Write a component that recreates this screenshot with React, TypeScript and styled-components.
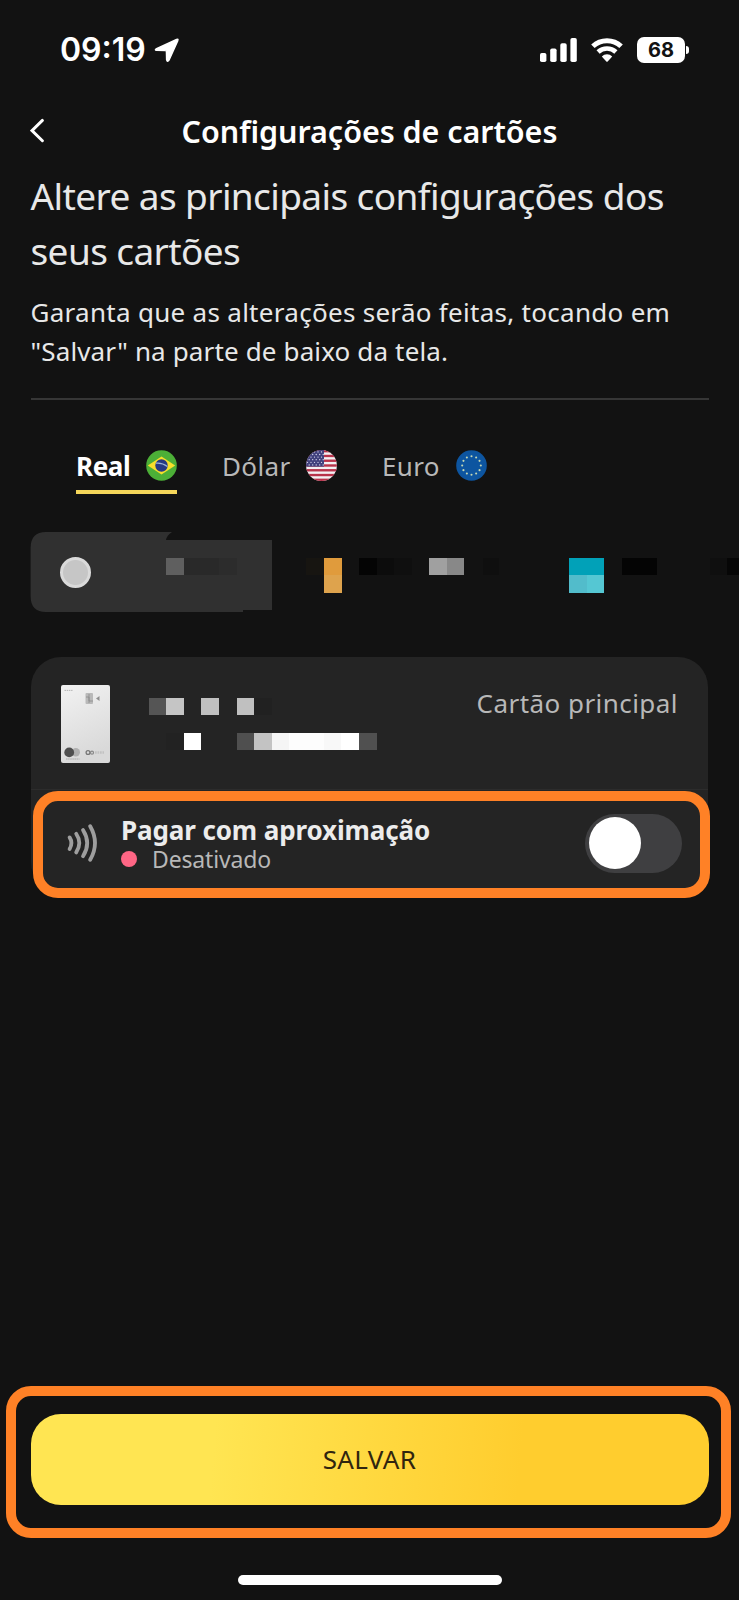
import React, { useState } from "react";
import styled, { createGlobalStyle } from "styled-components";

const GlobalStyle = createGlobalStyle`
  *, *::before, *::after { box-sizing: border-box; }
  body { margin: 0; background: #121212; }
  button { border: 0; margin: 0; padding: 0; background: none; color: inherit; font: inherit; }
  svg { display: block; flex: none; }
`;

const Screen = styled.main`
  display: flex;
  flex-direction: column;
  width: 739px;
  height: 1600px;
  overflow: hidden;
  background: #121212;
  color: #e8e8e8;
  font-family: "Noto Sans", "Open Sans", sans-serif;
  white-space: nowrap;
`;

const StatusBar = styled.div`
  display: flex;
  align-items: center;
  height: 99px;
  padding: 0 50px 0 60px;
  color: #fff;
`;

const Clock = styled.span`
  width: 94px;
  font: 600 32px/40px Inter, sans-serif;
  letter-spacing: 0px;
`;

const StatusIcons = styled.div`
  display: flex;
  align-items: center;
  gap: 14px;
  margin-left: auto;
`;

const Battery = styled.div`
  display: flex;
  align-items: center;
  gap: 1px;
`;

const BatteryBody = styled.div`
  width: 48px;
  height: 26px;
  border-radius: 7px;
  background: #fff;
  color: #121212;
  font: 700 20px/27px Inter, sans-serif;
  text-align: center;
`;

const BatteryTip = styled.i`
  width: 3px;
  height: 8px;
  border-radius: 0 3px 3px 0;
  background: #fff;
`;

const Header = styled.header`
  display: grid;
  grid-template-columns: 60px 1fr 60px;
  align-items: center;
  height: 40px;
  margin-top: 12px;
  padding: 0 30px;
`;

const Title = styled.h1`
  margin: -1px 0 0;
  color: #fff;
  font-size: 30.5px;
  font-weight: 600;
  line-height: 40px;
  letter-spacing: -0.05px;
  text-align: center;
`;

const Intro = styled.section`
  margin: 17px 30.5px 0;
  padding-bottom: 27px;
  border-bottom: 2px solid #363636;
`;

const Heading = styled.h2`
  margin: 0;
  font-size: 37px;
  font-weight: 400;
  line-height: 55px;
  letter-spacing: -0.6px;
`;

const Lead = styled.p`
  margin: 15px 0 0;
  font-size: 26px;
  line-height: 39px;
`;

const LeadLine = styled.span<{ $tracking: number }>`
  display: block;
  letter-spacing: ${(p) => p.$tracking}px;
`;

const Tabs = styled.nav`
  display: flex;
  height: 53px;
  margin: 41px 0 0 76px;
`;

const Tab = styled.button<{ $active?: boolean; $width: number; $gap: number }>`
  display: flex;
  align-items: center;
  justify-content: space-between;
  width: ${(p) => p.$width}px;
  margin-right: ${(p) => p.$gap}px;
  border-bottom: 4px solid ${(p) => (p.$active ? "#f5d65a" : "transparent")};
  color: ${(p) => (p.$active ? "#fff" : "#b8b8b8")};
  font-size: 26px;
  font-weight: ${(p) => (p.$active ? 700 : 400)};
  letter-spacing: ${(p) => (p.$active ? -0.4 : 0.35)}px;
`;

const Chips = styled.div`
  position: relative;
  height: 81px;
  margin-top: 38px;
`;

const ActiveChip = styled.div`
  display: flex;
  align-items: center;
  width: 242px;
  height: 81px;
  margin-left: 30px;
  padding-left: 30px;
  background: #303030;
  clip-path: path("M16 0H142Q137 3 136 8H242V78H213V80H16Q.6 80 .6 64V16Q.6 0 16 0Z");
`;

const ChipDot = styled.i`
  width: 31px;
  height: 31px;
  border: 3px solid #dadada;
  border-radius: 50%;
  background: #c6c6c6;
`;

const TileLayer = styled.svg`
  position: absolute;
  left: 0;
  top: 0;
`;

const CardPanel = styled.section`
  position: relative;
  height: 235px;
  margin: 44px 31px 0 30.5px;
  border-radius: 30px;
  background: #242424;
`;

const CardSummary = styled.div`
  display: flex;
  height: 133px;
  padding: 28px 30px 0;
  border-bottom: 1px solid #2c2c2c;
`;

const CardKind = styled.span`
  margin-left: auto;
  color: #b8b8b8;
  font-size: 26px;
  line-height: 36px;
  letter-spacing: 0.45px;
`;

const Contactless = styled.div`
  display: flex;
  align-items: center;
  width: 677px;
  height: 107px;
  margin: 1px 0 0 2.5px;
  padding: 0 18px 3px 23px;
  border: 10px solid #ff8126;
  border-radius: 25px;
`;

const ContactlessText = styled.div`
  display: flex;
  flex-direction: column;
  margin-left: 23px;
`;

const ContactlessTitle = styled.strong`
  color: #ececec;
  font-size: 26px;
  font-weight: 700;
  line-height: 32px;
  letter-spacing: -0.12px;
`;

const State = styled.span`
  display: flex;
  align-items: center;
  gap: 15px;
  color: #b8b8b8;
  font-size: 23px;
  line-height: 27px;
  letter-spacing: -0.15px;
`;

const StateDot = styled.i`
  width: 16px;
  height: 16px;
  border-radius: 50%;
  background: #ff6685;
`;

const Switch = styled.button<{ $on: boolean }>`
  display: flex;
  align-items: center;
  justify-content: ${(p) => (p.$on ? "flex-end" : "flex-start")};
  width: 97px;
  height: 59px;
  margin-left: auto;
  padding: 0 4px;
  border-radius: 30px;
  background: #3f3f41;
`;

const Knob = styled.i`
  width: 52px;
  height: 52px;
  border-radius: 50%;
  background: #fff;
`;

const Footer = styled.footer`
  display: flex;
  flex-direction: column;
  align-items: center;
  margin-top: auto;
  padding-bottom: 15px;
`;

const SaveFrame = styled.div`
  width: 725px;
  height: 152px;
  margin: 0 8px 37px 6px;
  padding: 18px 13px 0 14.5px;
  border: 10px solid #ff8126;
  border-radius: 25px;
`;

const SaveButton = styled.button`
  width: 678px;
  height: 91px;
  padding-bottom: 2px;
  border-radius: 30px;
  background: linear-gradient(95deg, #ffe552 27%, #ffcd2e 72%);
  color: #30250f;
  font-size: 26px;
  letter-spacing: 0.4px;
  text-align: center;
`;

const HomeIndicator = styled.div`
  width: 264px;
  height: 10px;
  margin-left: 1px;
  border-radius: 5px;
  background: #fff;
`;

type Tile = [x: number, y: number, w: number, h: number, fill: string];

const chipTiles: Tile[] = [
  [166, 26, 18, 17, "#5f5f5f"],
  [184, 26, 35, 17, "#292929"],
  [219, 26, 18, 17, "#2c2c2c"],
  [306, 26, 18, 17, "#171511"],
  [324, 26, 18, 17, "#e09b3c"],
  [324, 43, 18, 18, "#dea34d"],
  [359, 26, 18, 17, "#040404"],
  [377, 26, 17, 17, "#0c0c0c"],
  [394, 26, 18, 17, "#0f0f0f"],
  [429, 26, 18, 17, "#a0a0a0"],
  [447, 26, 17, 17, "#888888"],
  [483, 26, 16, 17, "#0f0f0f"],
  [569, 26, 35, 17, "#01a1b8"],
  [569, 43, 18, 18, "#52bccb"],
  [587, 43, 17, 18, "#55c7d3"],
  [622, 26, 35, 17, "#040404"],
  [710, 26, 17, 17, "#0f0f0f"],
  [727, 26, 12, 17, "#060606"],
];

const cardTiles: Tile[] = [
  [118, 41, 17, 17, "#555555"],
  [135, 41, 18, 17, "#c5c5c5"],
  [170, 41, 18, 17, "#c0c0c0"],
  [206, 41, 17, 17, "#c0c0c0"],
  [223, 41, 18, 17, "#212121"],
  [135, 76, 18, 17, "#222222"],
  [153, 76, 17, 17, "#ffffff"],
  [206, 76, 17, 17, "#4f4f4f"],
  [223, 76, 18, 17, "#c3c3c3"],
  [241, 76, 17, 17, "#f5f5f5"],
  [258, 76, 35, 17, "#fdfdfd"],
  [293, 76, 17, 17, "#f8f8f8"],
  [310, 76, 18, 17, "#ffffff"],
  [328, 76, 18, 17, "#505050"],
];

const Tiles = ({ tiles, width, height }: { tiles: Tile[]; width: number; height: number }) => (
  <TileLayer width={width} height={height} shapeRendering="crispEdges">
    {tiles.map(([x, y, w, h, fill]) => (
      <rect key={`${x}-${y}`} x={x} y={y} width={w} height={h} fill={fill} />
    ))}
  </TileLayer>
);

const LocationIcon = () => (
  <svg width="26" height="26" viewBox="0 0 26 26">
    <path
      d="M2 12 22.6 2.4Q24.6 1.6 23.8 3.6L15 23.2Q13.4 25.6 12.6 22.8L12.4 14.6Q12.4 13.6 11.4 13.6L2.4 13.4Q.6 13 2 12Z"
      fill="#fff"
      stroke="#fff"
      strokeWidth="1.4"
      strokeLinejoin="round"
    />
  </svg>
);

const SignalIcon = () => (
  <svg width="37" height="24" viewBox="0 0 37 24" fill="#fff">
    <rect x="0" y="15" width="6.4" height="9" rx="1.8" />
    <rect x="10.2" y="10.5" width="6.4" height="13.5" rx="1.8" />
    <rect x="20.3" y="5.3" width="6.4" height="18.7" rx="1.8" />
    <rect x="30.4" y="0" width="6.4" height="24" rx="1.8" />
  </svg>
);

const WifiIcon = () => (
  <svg width="32" height="24" viewBox="0 0 32 24" fill="none" stroke="#fff">
    <path d="M1.9 8.3a20.4 20.4 0 0 1 28.2 0" strokeWidth="5" />
    <path d="M7.1 14a13 13 0 0 1 17.8 0" strokeWidth="4.6" />
    <path d="M10.8 18.4a7.4 7.4 0 0 1 10.4 0L16.7 23.4q-.7.6-1.4 0Z" fill="#fff" stroke="none" />
  </svg>
);

const BackIcon = () => (
  <svg width="14" height="26" viewBox="0 0 14 26" fill="none" stroke="#fff" strokeWidth="2.9" strokeLinecap="round">
    <path d="M12.4 2.4 2 12.6 12.4 22.8" />
  </svg>
);

const BrazilFlag = () => (
  <svg width="31" height="31" viewBox="0 0 31 31">
    <circle cx="15.5" cy="15.5" r="15.3" fill="#4caf37" />
    <path d="M1.8 15.5 15.5 6.6 29.2 15.5 15.5 24.4Z" fill="#f7df2b" />
    <circle cx="15.5" cy="15.5" r="6.2" fill="#273a83" />
    <path d="M10 13.2q6.2-.7 11.4 3.4" stroke="#9bb3d7" strokeWidth="1.3" fill="none" />
  </svg>
);

const UsaFlag = () => (
  <svg width="31" height="31" viewBox="0 0 31 31">
    <defs>
      <clipPath id="usa"><circle cx="15.5" cy="15.5" r="15.4" /></clipPath>
    </defs>
    <g clipPath="url(#usa)">
      <rect width="31" height="31" fill="#f3f0f3" />
      {[0, 1, 2, 3, 4, 5, 6].map((i) => (
        <rect key={i} y={i * 4.77} width="31" height="2.38" fill="#b8324a" />
      ))}
      <rect width="18" height="16.6" fill="#41417d" />
      {[0, 1, 2, 3, 4, 5].map((r) =>
        [0, 1, 2, 3, 4].map((c) => (
          <circle key={`${r}${c}`} cx={1.5 + c * 3.5 + (r % 2) * 1.7} cy={1.9 + r * 2.6} r=".65" fill="#dcdcf0" />
        ))
      )}
    </g>
  </svg>
);

const EuroFlag = () => (
  <svg width="31" height="31" viewBox="0 0 31 31">
    <circle cx="15.5" cy="15.5" r="15.3" fill="#0d55a0" />
    {Array.from({ length: 12 }, (_, i) => (
      <circle
        key={i}
        cx={15.5 + 9.3 * Math.cos((i * Math.PI) / 6)}
        cy={15.5 + 9.3 * Math.sin((i * Math.PI) / 6)}
        r="1.05"
        fill="#c4d8b4"
      />
    ))}
  </svg>
);

const CardArt = () => (
  <svg width="49" height="78" viewBox="0 0 49 78">
    <defs>
      <linearGradient id="plastic" x1="0" y1="0" x2=".3" y2="1">
        <stop offset="0" stopColor="#f2f2f2" />
        <stop offset="1" stopColor="#d9d9d9" />
      </linearGradient>
    </defs>
    <rect width="49" height="78" rx="2" fill="url(#plastic)" />
    <path d="M3.5 5.4h8" stroke="#b4b4b4" strokeDasharray="1.5 .7" />
    <rect x="24.5" y="8" width="7.5" height="11" rx="1" fill="#b9b9b9" />
    <path d="M25 12h3v4h4M28 9v9" stroke="#8c8c8c" strokeWidth=".8" fill="none" />
    <path d="M35 13.5 38.5 11v5Z" fill="#8f8f8f" />
    <circle cx="14.8" cy="67.2" r="4.2" fill="#b0b0b0" />
    <circle cx="8.2" cy="67.4" r="4.9" fill="#4e4e4e" />
    <path d="M5 74h13.5" stroke="#aaa" strokeDasharray="1.6 .5" />
    <circle cx="27" cy="67.5" r="1.9" fill="none" stroke="#777" strokeWidth="1.3" />
    <circle cx="31" cy="67.7" r="1.5" fill="none" stroke="#888" strokeWidth="1.2" />
    <path d="M34 67.5h9" stroke="#c2c2c2" strokeWidth="2.4" strokeDasharray="1.7 .8" />
  </svg>
);

const WavesIcon = () => (
  <svg width="32" height="40" viewBox="0 0 32 40" fill="none" stroke="#9e9e9e" strokeWidth="3.8" strokeLinecap="round">
    <path d="M3.6 14.4q3.6 5.5 0 11.6" />
    <path d="M10.2 10.8q6.2 9.2 0 18.6" />
    <path d="M17 7q8.4 13.2 0 26.2" />
    <path d="M24.2 3.2q9.6 16.8 0 33.6" />
  </svg>
);

export default function App() {
  const [enabled, setEnabled] = useState(false);

  return (
    <Screen>
      <GlobalStyle />
      <StatusBar>
        <Clock>09:19</Clock>
        <LocationIcon />
        <StatusIcons>
          <SignalIcon />
          <WifiIcon />
          <Battery>
            <BatteryBody>68</BatteryBody>
            <BatteryTip />
          </Battery>
        </StatusIcons>
      </StatusBar>

      <Header>
        <BackIcon />
        <Title>Configurações de cartões</Title>
      </Header>

      <Intro>
        <Heading>
          Altere as principais configurações dos
          <br />
          seus cartões
        </Heading>
        <Lead>
          <LeadLine $tracking={0.29}>Garanta que as alterações serão feitas, tocando em</LeadLine>
          <LeadLine $tracking={0.14}>"Salvar" na parte de baixo da tela.</LeadLine>
        </Lead>
      </Intro>

      <Tabs>
        <Tab $active $width={101} $gap={45}>
          Real <BrazilFlag />
        </Tab>
        <Tab $width={115} $gap={45}>
          Dólar <UsaFlag />
        </Tab>
        <Tab $width={105} $gap={0}>
          Euro <EuroFlag />
        </Tab>
      </Tabs>

      <Chips>
        <ActiveChip>
          <ChipDot />
        </ActiveChip>
        <Tiles tiles={chipTiles} width={739} height={81} />
      </Chips>

      <CardPanel>
        <Tiles tiles={cardTiles} width={400} height={120} />
        <CardSummary>
          <CardArt />
          <CardKind>Cartão principal</CardKind>
        </CardSummary>
        <Contactless>
          <WavesIcon />
          <ContactlessText>
            <ContactlessTitle>Pagar com aproximação</ContactlessTitle>
            <State>
              <StateDot />
              Desativado
            </State>
          </ContactlessText>
          <Switch $on={enabled} onClick={() => setEnabled(!enabled)} aria-label="Pagar com aproximação">
            <Knob />
          </Switch>
        </Contactless>
      </CardPanel>

      <Footer>
        <SaveFrame>
          <SaveButton>SALVAR</SaveButton>
        </SaveFrame>
        <HomeIndicator />
      </Footer>
    </Screen>
  );
}
